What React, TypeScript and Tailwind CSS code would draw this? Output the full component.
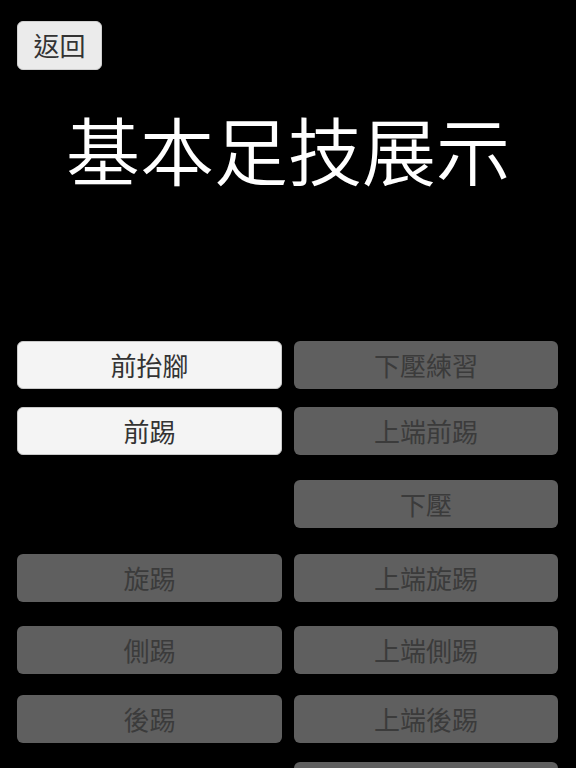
import React from "react";

const font = { fontFamily: '"Noto Sans CJK TC", "Noto Sans CJK SC", "Noto Sans", sans-serif' };

type Cell = { label: string; active?: boolean } | null;

const rows: { mt: string; left: Cell; right: Cell }[] = [
  { mt: "mt-0", left: { label: "前抬腳", active: true }, right: { label: "下壓練習" } },
  { mt: "mt-[18px]", left: { label: "前踢", active: true }, right: { label: "上端前踢" } },
  { mt: "mt-[25px]", left: null, right: { label: "下壓" } },
  { mt: "mt-[26px]", left: { label: "旋踢" }, right: { label: "上端旋踢" } },
  { mt: "mt-[24px]", left: { label: "側踢" }, right: { label: "上端側踢" } },
  { mt: "mt-[21px]", left: { label: "後踢" }, right: { label: "上端後踢" } },
  { mt: "mt-[19px]", left: null, right: { label: "" } },
];

function Btn({ cell }: { cell: Cell }) {
  if (!cell) return <div className="h-[48px]" />;
  if (cell.active) {
    return (
      <button className="h-[48px] w-full rounded-[6px] bg-[#f4f4f4] border border-[#c8c8c8] text-[26px] leading-none text-[#333333] flex items-center justify-center pb-[1px]">
        {cell.label}
      </button>
    );
  }
  return (
    <button className="h-[48px] w-full rounded-[6px] bg-[#5f5f5f] text-[26px] leading-none text-[#3b3b3b] flex items-center justify-center pb-[1px]">
      {cell.label}
    </button>
  );
}

export default function App() {
  return (
    <div className="w-[576px] h-[768px] bg-black overflow-hidden" style={font}>
      <div className="pt-[21px] pl-[17px]">
        <button className="w-[85px] h-[49px] rounded-[6px] bg-[#ebebeb] border border-[#cfcfcf] text-[26px] leading-none text-[#333333] flex items-center justify-center pb-[1px]">
          返回
        </button>
      </div>
      <h1 className="mt-[41px] h-[74px] text-[74px] leading-[74px] text-white text-center font-[350]">
        基本足技展示
      </h1>
      <div className="mt-[156px] pl-[17px] pr-[18px] flex flex-col">
        {rows.map((r, i) => (
          <div key={i} className={`${r.mt} shrink-0 grid grid-cols-[265px_264px] gap-x-[12px]`}>
            <Btn cell={r.left} />
            <Btn cell={r.right} />
          </div>
        ))}
      </div>
    </div>
  );
}
